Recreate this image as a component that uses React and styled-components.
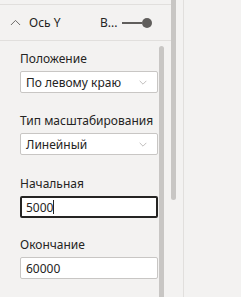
import React from 'react';
import styled, { createGlobalStyle } from 'styled-components';

const GlobalStyle = createGlobalStyle`
  body {
    margin: 0;
    background: #f3f2f1;
    font-family: "Noto Sans", "Open Sans", sans-serif;
    color: #252423;
  }
`;

const Page = styled.div`
  display: flex;
  height: 297px;
  overflow: hidden;
  background: #f3f2f1;
`;

const Panel = styled.div`
  width: 171px;
  display: flex;
  flex-direction: column;
`;

const TopRule = styled.div`
  height: 4px;
  border-bottom: 1px solid #e1dfdd;
`;

const Header = styled.div`
  height: 35px;
  display: flex;
  align-items: center;
  padding-left: 10px;
  border-bottom: 1px solid #e1dfdd;
  font-size: 12px;
`;

const Title = styled.span`
  margin-left: 8px;
  width: 71px;
`;

const Value = styled.span`
  width: 22px;
`;

const Toggle = styled.div`
  width: 30px;
  height: 10px;
  display: flex;
  align-items: center;
  &::before {
    content: '';
    width: 20px;
    height: 2px;
    background: #605e5c;
  }
  &::after {
    content: '';
    width: 10px;
    height: 10px;
    border-radius: 50%;
    background: #605e5c;
  }
`;

const Body = styled.div`
  flex: 1;
  display: flex;
  min-height: 0;
`;

const Fields = styled.div`
  width: 138px;
  padding: 10px 0 0 20px;
  display: flex;
  flex-direction: column;
`;

const Label = styled.div`
  font-size: 12px;
  line-height: 16px;
  margin-bottom: 4px;
  margin-top: ${(p) => p.$top || 0}px;
  white-space: nowrap;
`;

const Box = styled.div`
  height: 22px;
  box-sizing: border-box;
  background: #fff;
  border: 1px solid ${(p) => (p.$active ? '#252423' : '#c8c6c4')};
  border-width: ${(p) => (p.$active ? '2px' : '1px')};
  border-radius: 2px;
  display: flex;
  align-items: center;
  justify-content: space-between;
  padding: 0 ${(p) => (p.$active ? 9 : 10)}px 0 ${(p) => (p.$active ? 4 : 5)}px;
  font-size: 12px;
`;

const Typed = styled.span`
  display: flex;
  align-items: center;
`;

const Caret = styled.span`
  display: inline-block;
  width: 1px;
  height: 14px;
  background: #252423;
`;

const InnerTrack = styled.div`
  width: 5px;
  margin: 5px 0 0 1px;
  background: #c8c6c4;
  border-radius: 3px 3px 0 0;
`;

const OuterTrack = styled.div`
  width: 5px;
  height: 200px;
  background: #c8c6c4;
  border-radius: 0 0 3px 3px;
`;

const Divider = styled.div`
  margin-left: 7px;
  width: 1px;
  background: #e1dfdd;
`;

const Chevron = ({ up, color = '#605e5c', size = 11 }) => (
  <svg width={size} height={size / 2 + 1} viewBox="0 0 12 7" fill="none">
    <path
      d={up ? 'M1 6.5L6 1.5L11 6.5' : 'M1 1L6 6L11 1'}
      stroke={color}
      strokeWidth="1"
    />
  </svg>
);

const Select = ({ children }) => (
  <Box>
    <span>{children}</span>
    <Chevron color="#a19f9d" size={8} />
  </Box>
);

export default function App() {
  return (
    <>
      <GlobalStyle />
      <Page>
        <Panel>
          <TopRule />
          <Header>
            <Chevron up />
            <Title>Ось Y</Title>
            <Value>В...</Value>
            <Toggle />
          </Header>
          <Body>
            <Fields>
              <Label>Положение</Label>
              <Select>По левому краю</Select>
              <Label $top={20}>Тип масштабирования</Label>
              <Select>Линейный</Select>
              <Label $top={21}>Начальная</Label>
              <Box $active>
                <Typed>
                  5000<Caret />
                </Typed>
              </Box>
              <Label $top={19}>Окончание</Label>
              <Box>60000</Box>
            </Fields>
            <InnerTrack />
          </Body>
        </Panel>
        <OuterTrack />
        <Divider />
      </Page>
    </>
  );
}
